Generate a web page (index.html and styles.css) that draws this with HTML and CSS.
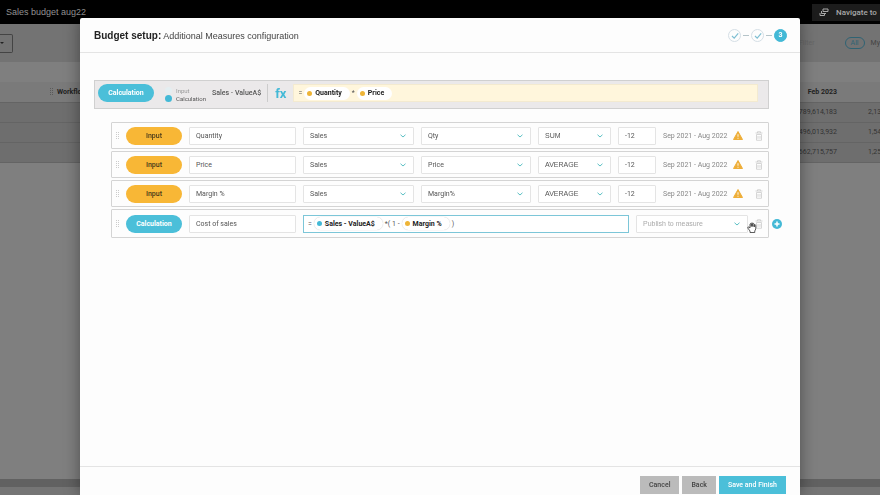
FILE: index.html
```html
<!DOCTYPE html>
<html lang="en">
<head>
    <meta charset="UTF-8">
    <meta name="viewport" content="width=device-width, initial-scale=1.0">
    <title>Sales budget aug22</title>
    <link rel="stylesheet" href="styles.css">
</head>
<body>

    <svg class="sprite" aria-hidden="true">
        <symbol id="icon-warning" viewBox="0 0 20 18">
            <path d="M10 1 L19 17 H1 Z" fill="#eeae38" stroke="#eeae38" stroke-width="2" stroke-linejoin="round"/>
            <path d="M10 6.5 V11.5 M10 13.5 V15.5" stroke="#fff" stroke-width="1.8"/>
        </symbol>
        <symbol id="icon-trash" viewBox="0 0 16 20">
            <path d="M1 4 H15 M5 4 V1.5 H11 V4 M3 7 H13 V18.5 H3 Z M6 10 V15.5 M10 10 V15.5" fill="none" stroke="#ccc" stroke-width="1.6"/>
        </symbol>
        <symbol id="icon-check" viewBox="0 0 12 12">
            <path d="M3 6 L5.2 8.2 L9.2 3.3" fill="none" stroke="#7fbfd3" stroke-width="1.2"/>
        </symbol>
    </svg>

    <div class="page">
        <header class="topbar">
            <span class="topbar-title">Sales budget aug22</span>
            <button class="navigate" type="button">
                <svg viewBox="0 0 20 18" width="10" height="9" fill="none" stroke="#aaa" stroke-width="2">
                    <path d="M8 2 H18 V7 H8 Z M5 6 V11 H14 M2 10 V15 H11 V11"/>
                </svg>
                Navigate to
            </button>
        </header>

        <div class="toolbar">
            <button class="toolbar-menu" type="button" aria-label="Options"><span class="caret"></span></button>
            <div class="filters">
                <span class="filter-label">Filter</span>
                <button class="filter-all" type="button">All</button>
                <button class="filter-my" type="button">My</button>
            </div>
        </div>

        <div class="sheet">
            <table class="sheet-table">
                <colgroup><col class="col-first"><col><col class="col-month"><col class="col-next"></colgroup>
                <thead>
                    <tr><th></th><th><span class="drag"></span>Workflow</th><th class="number">Feb 2023</th><th></th></tr>
                </thead>
                <tbody>
                    <tr><td></td><td></td><td class="number">789,614,183</td><td>2,13</td></tr>
                    <tr><td></td><td></td><td class="number">496,013,932</td><td>1,54</td></tr>
                    <tr><td></td><td></td><td class="number">662,715,757</td><td>1,25</td></tr>
                </tbody>
            </table>
        </div>
        <div class="scrollbar"></div>
    </div>

    <div class="overlay">
        <section class="dialog" role="dialog" aria-labelledby="dialog-title">
            <header class="dialog-header">
                <h1 id="dialog-title"><b>Budget setup:</b> Additional Measures configuration</h1>
                <ol class="steps">
                    <li class="step"><svg width="12" height="12"><use href="#icon-check"/></svg></li>
                    <li class="step"><svg width="12" height="12"><use href="#icon-check"/></svg></li>
                    <li class="step current">3</li>
                </ol>
            </header>

            <div class="dialog-body">
                <div class="summary">
                    <button class="tag calculation" type="button">Calculation</button>
                    <div class="kind">
                        <label class="kind-input"><input type="radio" name="kind">Input</label>
                        <label><input type="radio" name="kind" checked>Calculation</label>
                    </div>
                    <span class="summary-name">Sales - ValueA$</span>
                    <span class="fx">fx</span>
                    <div class="formula" role="textbox" aria-label="Formula">
                        <span>=</span>
                        <span class="token input">Quantity</span>
                        <span>*</span>
                        <span class="token input">Price</span>
                    </div>
                </div>

                <div class="measures">
                    <div class="measure">
                        <span class="drag"></span>
                        <button class="tag" type="button">Input</button>
                        <input class="field" type="text" value="Quantity" aria-label="Name">
                        <select class="field" aria-label="Source"><option>Sales</option></select>
                        <select class="field" aria-label="Column"><option>Qty</option></select>
                        <select class="field aggregate" aria-label="Aggregate"><option>SUM</option></select>
                        <input class="field" type="text" value="-12" aria-label="Offset">
                        <span class="period">Sep 2021 - Aug 2022</span>
                        <svg width="10" height="9"><use href="#icon-warning"/></svg>
                        <button class="delete" type="button" aria-label="Delete"><svg width="8" height="10"><use href="#icon-trash"/></svg></button>
                    </div>
                    <div class="measure">
                        <span class="drag"></span>
                        <button class="tag" type="button">Input</button>
                        <input class="field" type="text" value="Price" aria-label="Name">
                        <select class="field" aria-label="Source"><option>Sales</option></select>
                        <select class="field" aria-label="Column"><option>Price</option></select>
                        <select class="field aggregate" aria-label="Aggregate"><option>AVERAGE</option></select>
                        <input class="field" type="text" value="-12" aria-label="Offset">
                        <span class="period">Sep 2021 - Aug 2022</span>
                        <svg width="10" height="9"><use href="#icon-warning"/></svg>
                        <button class="delete" type="button" aria-label="Delete"><svg width="8" height="10"><use href="#icon-trash"/></svg></button>
                    </div>
                    <div class="measure">
                        <span class="drag"></span>
                        <button class="tag" type="button">Input</button>
                        <input class="field" type="text" value="Margin %" aria-label="Name">
                        <select class="field" aria-label="Source"><option>Sales</option></select>
                        <select class="field" aria-label="Column"><option>Margin%</option></select>
                        <select class="field aggregate" aria-label="Aggregate"><option>AVERAGE</option></select>
                        <input class="field" type="text" value="-12" aria-label="Offset">
                        <span class="period">Sep 2021 - Aug 2022</span>
                        <svg width="10" height="9"><use href="#icon-warning"/></svg>
                        <button class="delete" type="button" aria-label="Delete"><svg width="8" height="10"><use href="#icon-trash"/></svg></button>
                    </div>
                    <div class="measure computed">
                        <span class="drag"></span>
                        <button class="tag calculation" type="button">Calculation</button>
                        <input class="field" type="text" value="Cost of sales" aria-label="Name">
                        <div class="formula editing" role="textbox" aria-label="Formula">
                            <span>=</span>
                            <span class="token">Sales - ValueA$</span>
                            <span>*( 1 -</span>
                            <span class="token input">Margin %</span>
                            <span>)</span>
                        </div>
                        <select class="field publish" aria-label="Publish to measure"><option>Publish to measure</option></select>
                        <button class="delete" type="button" aria-label="Delete">
                            <svg width="8" height="10"><use href="#icon-trash"/></svg>
                            <svg class="hand" viewBox="0 0 20 22" width="10" height="11">
                                <path d="M6 21 V18 L1.5 12 Q1 9.5 3.5 10 L6 12 V4 Q7 2 8.5 4 V9 V2.5 Q10 0.5 11.5 2.5 V9 V3.5 Q13 2 14.5 4 V10 V6 Q16.5 4.5 17.5 6.5 V14 L15.5 18 V21 Z" fill="#fff" stroke="#333" stroke-width="1.6" stroke-linejoin="round"/>
                            </svg>
                        </button>
                    </div>
                    <button class="add" type="button" aria-label="Add measure">
                        <svg viewBox="0 0 20 20" width="10" height="10">
                            <circle cx="10" cy="10" r="10" fill="#43b9d6"/>
                            <path d="M10 5 V15 M5 10 H15" stroke="#fff" stroke-width="3"/>
                        </svg>
                    </button>
                </div>
            </div>

            <footer class="dialog-footer">
                <button class="btn" type="button">Cancel</button>
                <button class="btn" type="button">Back</button>
                <button class="btn primary" type="button">Save and Finish</button>
            </footer>
        </section>
    </div>

</body>
</html>
```
FILE: styles.css
```css
* {
    margin: 0;
    padding: 0;
    box-sizing: border-box;
}

body {
    font-family: Roboto, Arial, sans-serif;
    font-size: 7px;
    color: #555;
    overflow: hidden;
}

button, input, select {
    font: inherit;
    color: inherit;
    border: 0;
    background: none;
}

svg {
    display: block;
}

.sprite {
    display: none;
}

/* Page behind the dialog */
.page {
    display: flex;
    flex-direction: column;
    height: 100vh;
    background: #757575;
    overflow: hidden;
}

.topbar {
    display: flex;
    align-items: center;
    justify-content: space-between;
    height: 24px;
    padding-left: 6px;
    background: #000;
}

.topbar-title {
    font-family: "Liberation Sans", Arial, sans-serif;
    font-size: 9px;
    color: #929292;
}

.navigate {
    display: flex;
    align-items: center;
    gap: 7px;
    width: 68px;
    height: 17px;
    padding-left: 7px;
    background: #1c1c1c;
    color: #a8a8a8;
    font-size: 8px;
    font-weight: 500;
    white-space: nowrap;
}

.toolbar {
    display: flex;
    align-items: center;
    justify-content: space-between;
    height: 38px;
    background: #737373;
}

.toolbar-menu {
    width: 13px;
    height: 19px;
    border: 1px solid #444;
    border-left: 0;
    border-radius: 0 2px 2px 0;
}

.caret {
    display: block;
    width: 4px;
    border: 2px solid transparent;
    border-top-color: #222;
    border-bottom: 0;
}

.filters {
    display: flex;
    align-items: center;
    gap: 6px;
    color: #444;
}

.filter-label {
    margin-right: 24px;
    color: #666;
}

.filter-all {
    width: 20px;
    height: 12px;
    border: 1px solid #2f6373;
    border-radius: 6px;
    color: #2f6373;
}

.sheet {
    flex: 1;
    padding-top: 20px;
    background: #7f7f7f;
    overflow: hidden;
}

.sheet-table {
    width: 100%;
    table-layout: fixed;
    border-collapse: collapse;
    color: #333;
}

.sheet-table tr {
    height: 20px;
    background: #6e6e6e;
    border-bottom: 1px solid #646464;
}

.sheet-table thead tr {
    background: #7a7a7a;
    color: #222;
}

.sheet-table th {
    text-align: left;
}

.sheet-table .drag {
    display: inline-block;
    margin-right: 4px;
    border-color: #5a5a5a;
    vertical-align: middle;
}

.sheet-table .number {
    text-align: right;
}

.col-first {
    width: 50px;
}

.col-month {
    width: 60px;
}

.col-next {
    width: 43px;
}

.sheet-table td:last-child {
    padding-left: 31px;
}

.scrollbar {
    height: 8px;
    margin-bottom: 8px;
    background: #616161;
}

/* Dialog */
.overlay {
    position: fixed;
    inset: 0;
    display: flex;
    padding: 18px 80px 0;
}

.dialog {
    flex: 1;
    display: flex;
    flex-direction: column;
    background: #fdfdfd;
    border-radius: 2px 2px 0 0;
    box-shadow: 0 0 16px rgba(0, 0, 0, 0.4);
}

.dialog-header {
    display: flex;
    align-items: center;
    justify-content: space-between;
    height: 35px;
    padding: 0 13px 0 14px;
    border-bottom: 1px solid #e4e4e4;
}

.dialog-header h1 {
    font-family: "Liberation Sans", Arial, sans-serif;
    font-size: 9px;
    font-weight: normal;
    color: #444;
}

.dialog-header b {
    font-size: 10px;
    color: #222;
}

.steps {
    display: flex;
    gap: 10px;
    list-style: none;
}

.step {
    display: grid;
    place-items: center;
    position: relative;
    width: 13px;
    height: 13px;
    border: 1px solid #d5dfe6;
    border-radius: 50%;
}

.step + .step::before {
    content: "";
    position: absolute;
    left: -9px;
    width: 6px;
    height: 1px;
    background: #b5c4c9;
}

.step.current {
    border-color: #43b9d6;
    background: #43b9d6;
    color: #fff;
    font-weight: bold;
}

.dialog-body {
    flex: 1;
    padding: 27px 15px 0 14px;
}

.summary {
    display: flex;
    align-items: center;
    height: 29px;
    margin-right: 16px;
    padding: 0 10px 3px 3px;
    border: 1px solid #d0d0d0;
    background: #ebe9ea;
}

.tag {
    width: 56px;
    height: 18px;
    border-radius: 9px;
    background: #f8b736;
    color: #4a3a1a;
    font-weight: 500;
    text-align: center;
}

.tag.calculation {
    background: #4bbfd9;
    color: #fff;
    font-weight: bold;
}

.kind {
    display: grid;
    margin: 3px 0 0 11px;
    font-size: 6px;
    line-height: 8px;
}

.kind label {
    display: flex;
    align-items: center;
    gap: 4px;
}

.kind-input {
    color: #999;
}

.kind input {
    appearance: none;
    width: 7px;
    height: 7px;
    border-radius: 50%;
    background: #e4eef1;
}

.kind input:checked {
    background: #43b9d6;
}

.summary-name {
    margin-left: 6px;
    padding-right: 6px;
    border-right: 1px solid #ccc;
    font-weight: 500;
    line-height: 18px;
}

.fx {
    margin: 0 7px;
    color: #43b9d6;
    font-size: 13px;
    font-weight: bold;
}

.formula {
    flex: 1;
    display: flex;
    align-items: center;
    gap: 2px;
    height: 18px;
    padding: 0 4px;
    border: 1px solid #f3ead0;
    background: #fff6dc;
    white-space: nowrap;
}

.formula.editing {
    border-color: #7cc6d8;
    background: #fff;
}

.token {
    display: flex;
    align-items: center;
    gap: 3px;
    height: 13px;
    padding: 0 8px 0 3px;
    border-radius: 7px;
    background: #fff;
    color: #222;
    font-weight: bold;
}

.editing .token {
    box-shadow: 0 0 1px #bbb;
}

.token::before {
    content: "";
    width: 5px;
    height: 5px;
    border-radius: 50%;
    background: #43b9d6;
}

.token.input::before {
    background: #eeb436;
}

/* Measure rows, with a narrow column for the add button */
.measures {
    display: grid;
    grid-template-columns: 1fr 16px;
    row-gap: 2px;
    margin: 13px 0 0 17px;
}

.measure {
    grid-column: 1;
    display: grid;
    grid-template-columns: 3px 56px minmax(0, 107fr) minmax(0, 111fr) minmax(0, 110fr) minmax(0, 73fr) 38px 63px 15px 13px;
    align-items: center;
    gap: 7px;
    height: 27px;
    padding-left: 4px;
    border: 1px solid #d4d4d4;
    border-radius: 1px;
}

.measure.computed {
    grid-template-columns: 3px 56px minmax(0, 107fr) minmax(0, 326fr) minmax(0, 112fr) 13px;
    height: 29px;
}

.drag {
    width: 3px;
    height: 7px;
    border: 1px dotted #ccc;
    border-width: 0 1px;
}

.field {
    width: 100%;
    height: 18px;
    padding: 0 6px;
    border: 1px solid #e4e4e4;
    border-radius: 1px;
    background: #fff;
}

select.field {
    appearance: none;
    background: #fff url("data:image/svg+xml,%3Csvg xmlns='http://www.w3.org/2000/svg' viewBox='0 0 12 8'%3E%3Cpath d='M1 1.5 L6 6 L11 1.5' fill='none' stroke='%235bbfc4' stroke-width='2'/%3E%3C/svg%3E") no-repeat right 7px center / 6px 4px;
}

.aggregate,
.publish {
    font-family: "Liberation Sans", Arial, sans-serif;
}

select.publish {
    color: #aaa;
}

.period {
    color: #888;
    white-space: nowrap;
}

.delete {
    position: relative;
    width: 8px;
}

.hand {
    position: absolute;
    top: 3px;
    left: -8px;
}

.add {
    grid-column: 2;
    grid-row: 4;
    place-self: center;
}

.dialog-footer {
    display: flex;
    justify-content: flex-end;
    gap: 3px;
    padding: 9px 14px 1px;
    border-top: 1px solid #e4e4e4;
}

.btn {
    height: 18px;
    padding: 0 9px;
    background: #bbb;
    color: #444;
    font-weight: 500;
}

.btn.primary {
    background: #4bbfd9;
    color: #fff;
}
```
